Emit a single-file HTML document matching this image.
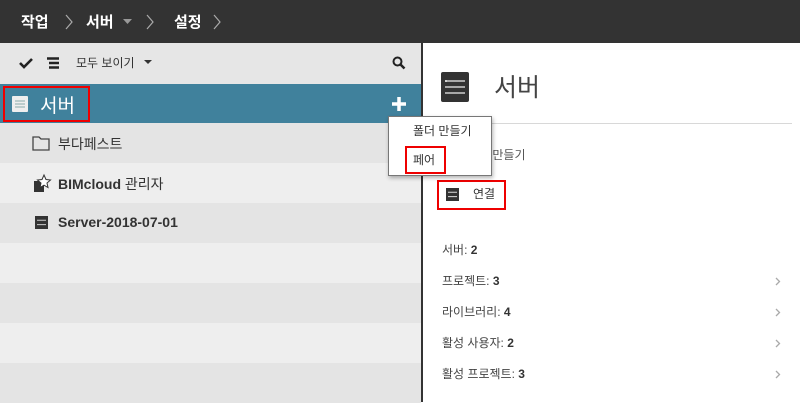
<!DOCTYPE html>
<html><head><meta charset="utf-8"><style>
*{margin:0;padding:0;box-sizing:border-box}
body{width:800px;height:402px;overflow:hidden;position:relative;background:#fff;font-family:"Liberation Sans","Noto Sans CJK KR",sans-serif;color:#333}
.a{position:absolute}
.top{left:0;top:0;width:800px;height:43px;background:#333}
.top span{position:absolute;top:11px;color:#fff;font-size:15px;font-weight:bold}
.row{position:absolute;left:0;width:421px;height:40px}
.stat{position:absolute;left:442px;font-size:12px;color:#444}
.stat b{color:#333}
</style></head><body>
<div class="a top">
<span style="left:21px">작업</span>
<svg class="a" style="left:65px;top:14px" width="8" height="16"><path d="M1 1l6 7-6 7" stroke="#aaa" stroke-width="1.2" fill="none"/></svg>
<span style="left:86px">서버</span>
<svg class="a" style="left:123px;top:19px" width="9" height="5"><path d="M0 0h9L4.5 5z" fill="#999"/></svg>
<svg class="a" style="left:146px;top:14px" width="8" height="16"><path d="M1 1l6 7-6 7" stroke="#aaa" stroke-width="1.2" fill="none"/></svg>
<span style="left:174px">설정</span>
<svg class="a" style="left:213px;top:14px" width="8" height="16"><path d="M1 1l6 7-6 7" stroke="#aaa" stroke-width="1.2" fill="none"/></svg>
</div>
<div class="a" style="left:0;top:43px;width:421px;height:41px;background:#e6e6e6"></div>
<svg class="a" style="left:19px;top:57px" width="14" height="12"><path d="M1 6l4 4 8-8" stroke="#222" stroke-width="2.6" fill="none"/></svg>
<svg class="a" style="left:46px;top:57px" width="14" height="12"><path d="M1 1.5h12M3 6h10M3 10.5h10" stroke="#222" stroke-width="2.4"/></svg>
<div class="a" style="left:76px;top:54px;font-size:12px;color:#333">모두 보이기</div>
<svg class="a" style="left:144px;top:60px" width="8" height="5"><path d="M0 0h8L4 4z" fill="#333"/></svg>
<svg class="a" style="left:392px;top:56px" width="14" height="14"><circle cx="5.5" cy="5.5" r="4" stroke="#222" stroke-width="2" fill="none"/><path d="M8.5 8.5l4 4" stroke="#222" stroke-width="2.5"/></svg>
<div class="row" style="top:84px;height:39px;background:#40819c"></div>
<div class="a" style="left:3px;top:86px;width:87px;height:36px;border:2px solid #e00"></div>
<svg class="a" style="left:12px;top:96px" width="16" height="16"><rect width="16" height="16" rx="1" fill="#eee"/><path d="M3 5h10M3 8h10M3 11h10" stroke="#8aa" stroke-width="1"/></svg>
<div class="a" style="left:40px;top:91px;font-size:19px;color:#fff">서버</div>
<svg class="a" style="left:391px;top:96px" width="16" height="16"><path d="M8 1v14M1 8h14" stroke="#fff" stroke-width="3.5"/></svg>
<div class="row" style="top:123px;background:#e4e4e4"></div>
<div class="row" style="top:163px;background:#eeeeee"></div>
<div class="row" style="top:203px;background:#e4e4e4"></div>
<div class="row" style="top:243px;background:#eeeeee"></div>
<div class="row" style="top:283px;background:#e4e4e4"></div>
<div class="row" style="top:323px;background:#eeeeee"></div>
<div class="row" style="top:363px;background:#e4e4e4"></div>
<div class="a" style="left:421px;top:43px;width:2px;height:359px;background:#333"></div>
<svg class="a" style="left:32px;top:135px" width="18" height="16"><path d="M1 2h6l2 2h8v11H1z" fill="none" stroke="#444" stroke-width="1.3"/></svg>
<div class="a" style="left:58px;top:134px;font-size:14px;color:#333">부다페스트</div>
<svg class="a" style="left:32px;top:173px" width="20" height="20"><rect x="2" y="8" width="10" height="11" fill="#333"/><path d="M12 2l2 4.5 4.5.5-3.5 3 1 4.5-4-2.3-4 2.3 1-4.5L5.5 7 10 6.5z" fill="#fff" stroke="#333" stroke-width="1"/></svg>
<div class="a" style="left:58px;top:174px;font-size:14px;font-weight:bold;color:#333">BIMcloud <span style="font-weight:normal">관리자</span></div>
<svg class="a" style="left:35px;top:216px" width="13" height="13"><rect width="13" height="13" fill="#333"/><path d="M2 4.3h9M2 8.6h9" stroke="#ccc" stroke-width="1"/></svg>
<div class="a" style="left:58px;top:214px;font-size:14px;font-weight:bold;color:#333">Server-2018-07-01</div>
<svg class="a" style="left:441px;top:72px" width="28" height="30"><rect width="28" height="30" rx="2" fill="#333"/><path d="M4 9h20M4 15h20M4 21h20" stroke="#eee" stroke-width="1.3"/><circle cx="5" cy="9" r="1" fill="#eee"/></svg>
<div class="a" style="left:494px;top:68px;font-size:25px;color:#444">서버</div>
<div class="a" style="left:430px;top:123px;width:362px;height:1px;background:#d8d8d8"></div>
<div class="a" style="left:478px;top:146px;font-size:12px;color:#555">더 만들기</div>
<div class="a" style="left:437px;top:180px;width:69px;height:30px;border:2px solid #e00"></div>
<svg class="a" style="left:446px;top:188px" width="13" height="13"><rect width="13" height="13" fill="#333"/><path d="M2 4.3h9M2 8.6h9" stroke="#ddd" stroke-width="1"/></svg>
<div class="a" style="left:473px;top:185px;font-size:12px;color:#333">연결</div>
<div class="stat" style="top:241px">서버: <b>2</b></div>
<div class="stat" style="top:272px">프로젝트: <b>3</b></div>
<div class="stat" style="top:303px">라이브러리: <b>4</b></div>
<div class="stat" style="top:334px">활성 사용자: <b>2</b></div>
<div class="stat" style="top:365px">활성 프로젝트: <b>3</b></div>
<svg class="a" style="left:775px;top:277px" width="6" height="9"><path d="M1 1l3.5 3.5L1 8" stroke="#aaa" stroke-width="1.3" fill="none"/></svg>
<svg class="a" style="left:775px;top:308px" width="6" height="9"><path d="M1 1l3.5 3.5L1 8" stroke="#aaa" stroke-width="1.3" fill="none"/></svg>
<svg class="a" style="left:775px;top:339px" width="6" height="9"><path d="M1 1l3.5 3.5L1 8" stroke="#aaa" stroke-width="1.3" fill="none"/></svg>
<svg class="a" style="left:775px;top:370px" width="6" height="9"><path d="M1 1l3.5 3.5L1 8" stroke="#aaa" stroke-width="1.3" fill="none"/></svg>
<div class="a" style="left:388px;top:116px;width:104px;height:60px;background:#fff;border:1px solid #777;box-shadow:1px 2px 4px rgba(0,0,0,.3)"></div>
<div class="a" style="left:413px;top:122px;font-size:12px;color:#333">폴더 만들기</div>
<div class="a" style="left:405px;top:146px;width:41px;height:28px;border:2px solid #e00"></div>
<div class="a" style="left:413px;top:151px;font-size:12px;color:#333">페어</div>
</body></html>
